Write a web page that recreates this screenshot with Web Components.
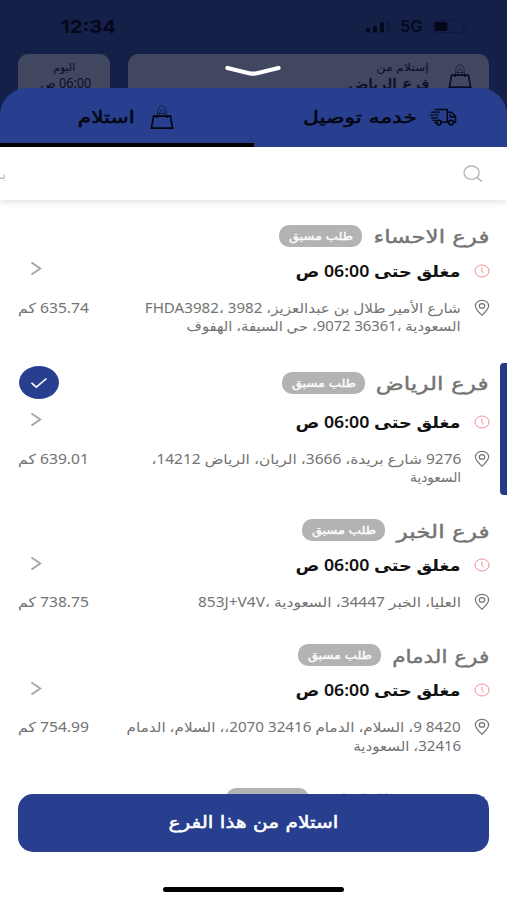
<!DOCTYPE html>
<html lang="ar" dir="rtl">
<head>
<meta charset="utf-8">
<title>استلام</title>
<style>
html,body{margin:0;padding:0;background:#fff;width:507px;height:900px;overflow:hidden}
</style>
</head>
<body>
<branch-page></branch-page>
<script>
const define = (name, html, setup) => customElements.define(name, class extends HTMLElement {
  connectedCallback() {
    if (this.shadowRoot) return;
    const root = this.attachShadow({ mode: 'open' });
    root.innerHTML = typeof html === 'function' ? html(this) : html;
    if (setup) setup(this, root);
  }
});

/* One line of text, widened or narrowed to the width in its "w" attribute. */
define('fit-text', el => `
<style>
:host{display:block;flex:none;direction:rtl;width:${el.getAttribute('w')}px;white-space:nowrap}
span{display:inline-block;transform-origin:right center}
</style><span><slot></slot></span>`, (el, root) => {
  const span = root.querySelector('span');
  const n = span.getBoundingClientRect().width;
  if (n) span.style.transform = `scaleX(${el.getAttribute('w') / n})`;
});

const ICONS = {
  bag: ['0 0 24 26', `<path d="M3.600 12.200H20.400L22.600 24.200H1.400Z" stroke-width="1.700"/><path d="M6.800 14V11.500M17.200 14V11.500" stroke-width="1.500"/><path d="M7.400 11.500C7.400 5 9 1.800 12 1.800s4.600 3.200 4.600 9.700M9.500 11.500C9.500 7.500 10.500 5.800 12 5.800s2.500 1.700 2.500 5.700M8.500 9.500H15.500" stroke-width=".8" opacity=".7"/>`],
  truck: ['0 0 28 18', `<path d="M6 1.500H18.300V14.200H13M18.300 4.200H22.500L26.500 8.600V14.200H24.600M18.300 14.200H19.300M21.300 6.200V9H26" stroke-width="1.500"/><circle cx="10" cy="14.600" r="2.300" stroke-width="1.600"/><circle cx="22" cy="14.600" r="2.300" stroke-width="1.600"/><path d="M2 4.200H11M.7 7H10M2 9.800H9M3.500 12.400H7M5 14.600H7.700" stroke-width="1.200"/>`],
  search: ['0 0 20 18', `<ellipse cx="8.600" cy="7.700" rx="7.600" ry="6.700" stroke-width="1.300"/><path d="M14 12.500L19 16.600" stroke-width="1.500"/>`],
  clock: ['0 0 16 14', `<ellipse cx="8" cy="7" rx="7" ry="6" stroke-width="1"/><path d="M7.800 3.600V7.300L9.800 9.200" stroke-width="1"/>`],
  pin: ['0 0 16 18', `<path d="M8 16.400C4.500 12.700 1.400 10 1.400 6.900C1.400 3.600 4.300 1.300 8 1.300s6.600 2.300 6.600 5.600C14.600 10 11.500 12.700 8 16.400Z" stroke-width="1.200"/><ellipse cx="8" cy="6.900" rx="2.700" ry="2.300" stroke-width="1.200"/>`],
  chevron: ['0 0 12 16', `<path d="M1.500 1.500L10.300 8L1.500 14.500" stroke-width="2"/>`],
  check: ['0 0 18 12', `<path d="M1.500 5.800L6.300 10.200L16.500 1.500" stroke-width="1.600"/>`],
  handle: ['0 0 56 12', `<path d="M2.500 3L24 8.200Q28 9.200 32 8.200L53.500 3" stroke-width="4.200" stroke-linecap="round"/>`]
};
define('line-icon', el => {
  const [box, body] = ICONS[el.getAttribute('name')];
  return `<style>:host{display:block;flex:none;width:${el.getAttribute('w')}px;height:${el.getAttribute('h')}px}
svg{display:block;width:100%;height:100%;fill:none;stroke:currentColor}</style>
<svg viewBox="${box}" preserveAspectRatio="none">${body}</svg>`;
});

define('status-bar', `
<style>
:host{display:flex;direction:ltr;height:54px;box-sizing:border-box;padding:16px 38px 0 61px;justify-content:space-between;
 color:#04081a;font:bold 18px/21px Inter,"Liberation Sans",sans-serif}
.r{display:flex;gap:9px;align-items:center;height:21px}
.net{font-size:15.500px;font-weight:600}
svg{display:block}
</style>
<fit-text w="55">12:34</fit-text>
<div class="r">
 <svg width="26" height="13" viewBox="0 0 26 13"><g fill="#04081a"><rect x="1" y="8" width="4" height="4.500" rx="1"/><rect x="8" y="6" width="4" height="6.500" rx="1"/><rect x="15" y="2" width="4" height="10.500" rx="1"/></g><rect x="21.500" y="0" width="4" height="12.500" rx="1" fill="#111a3d"/></svg>
 <fit-text class="net" w="22">5G</fit-text>
 <svg width="38" height="13" viewBox="1 0 38 13"><rect x="3" y=".5" width="31" height="12" rx="3.500" fill="none" stroke="#10183a"/><rect x="4.500" y="2" width="13" height="9" rx="2" fill="#04081a"/><path d="M35.500 4.500q2 2 0 4z" fill="#10183a"/></svg>
</div>`);

define('order-summary', `
<style>
:host{display:flex;gap:18px;padding:0 18px;height:60px;color:#090f25;font-family:"DejaVu Sans",sans-serif}
section{background:#40475f;border-radius:10px 10px 0 0;box-sizing:border-box;display:flex}
.main{width:361px;padding:5px 17px 0 0;gap:19px}
.main line-icon{margin-top:4px}
.slot{width:92px;flex-direction:column;align-items:center;padding-top:5px}
.a{font-size:10.500px;line-height:16px}
.b{font-size:13.500px;line-height:18px;font-family:"Noto Sans","DejaVu Sans",sans-serif}
.slot .b{margin-right:-4px;margin-top:-1px}
.main .b{font:14px/19px "DejaVu Sans",sans-serif;-webkit-text-stroke:.4px}
</style>
<section class="main"><line-icon name="bag" w="24" h="26"></line-icon>
<div><fit-text class="a" w="52">إستلام من</fit-text><fit-text class="b" w="81">فرع الرياض</fit-text></div></section>
<section class="slot"><fit-text class="a" w="22">اليوم</fit-text><fit-text class="b" w="51">06:00 ص</fit-text></section>`);

define('mode-tabs', `
<style>
:host{display:grid;grid-template-columns:253px 254px;height:59px;background:#273f8e;border-radius:27px 27px 0 0;overflow:hidden;color:#030611}
div{display:flex;box-sizing:border-box;font:17px/26px "DejaVu Sans",sans-serif;-webkit-text-stroke:.5px}
.d{padding:16px 50px 0 0;gap:12px}
.p{padding:16px 80px 0 0;gap:15px;border-bottom:4px solid #000}
.d line-icon{margin-top:4px}
</style>
<div class="d"><line-icon name="truck" w="28" h="18"></line-icon><fit-text w="114">خدمه توصيل</fit-text></div>
<div class="p"><line-icon name="bag" w="24" h="26"></line-icon><fit-text w="57">استلام</fit-text></div>`);

define('search-bar', `
<style>
:host{display:flex;align-items:center;height:53px;padding-right:24px;background:#fff;color:#b4b4b4;box-shadow:0 3px 5px #00000018;clip-path:inset(0 0 -10px 0);position:relative;z-index:1}
fit-text{font:15px/24px "DejaVu Sans",sans-serif;margin-right:457px}
</style>
<line-icon name="search" w="20" h="18"></line-icon><fit-text w="6">بـ</fit-text>`);

define('branch-item', el => `
<style>
:host{display:block;padding:0 18px 31.250px;color:#737373;font-family:"Noto Sans","DejaVu Sans",sans-serif}
.row{display:flex;align-items:center}
.title{height:${el.hasAttribute('selected') ? 33 : 25}px;gap:11px}
.name{font:18px/25px "DejaVu Sans",sans-serif;color:#747474;-webkit-text-stroke:.4px;margin-top:${el.hasAttribute('km') ? 2 : 5}px}
.badge{width:83px;height:22px;border-radius:10px;background:#b3b3b3;color:#fff;display:flex;align-items:center;justify-content:center;font:11px/20px "DejaVu Sans",sans-serif;-webkit-text-stroke:.35px}
.badge fit-text{margin-top:2px}
.tick{margin-right:auto;width:40px;height:33px;border-radius:50%;background:#273f8e;color:#fff;display:flex;align-items:center;justify-content:center;margin-left:.5px}
.time,.addr{margin-right:-1px}
.time{height:24px;margin-top:10.500px;gap:13px;color:#111;font-weight:600;font-size:15.500px;line-height:24px}
.time .go{margin:-4px auto 0 12px;color:#a9a9a9}
.clock{color:#f58d96}
.addr{display:flex;align-items:flex-start;margin-top:15.750px;gap:13px;font-size:13.700px;line-height:18.500px}
.addr .km{margin-right:auto;margin-left:.5px}
</style>
<div class="row title"><fit-text class="name" w="${el.getAttribute('name-w')}">${el.getAttribute('name')}</fit-text>
<div class="badge"><fit-text w="64">طلب مسبق</fit-text></div>${el.hasAttribute('selected') ? '<div class="tick"><line-icon name="check" w="18" h="12"></line-icon></div>' : ''}</div>
${el.hasAttribute('km') ? `<div class="row time"><line-icon class="clock" name="clock" w="16" h="14"></line-icon><fit-text w="165">مغلق حتى 06:00 ص</fit-text><line-icon class="go" name="chevron" w="12" h="15"></line-icon></div>
<div class="addr"><line-icon name="pin" w="16" h="18"></line-icon><div><slot></slot></div><fit-text class="km" w="71">${el.getAttribute('km')} كم</fit-text></div>` : ''}`);

define('branch-list', `
<style>:host{display:block;padding-top:23.250px}</style>
<branch-item name="فرع الاحساء" name-w="116" km="635.74"><fit-text w="316">شارع الأمير طلال بن عبدالعزيز، FHDA3982، 3982</fit-text><fit-text w="274">السعودية ،36361 9072، حي السيفة، الهفوف</fit-text></branch-item>
<branch-item selected name="فرع الرياض" name-w="113" km="639.01" style="margin-top:-.5px"><fit-text w="310">9276 شارع بريدة، 3666، الريان، الرياض 14212،</fit-text><fit-text w="51">السعودية</fit-text></branch-item>
<branch-item name="فرع الخبر" name-w="93" km="738.75"><fit-text w="263">العليا، الخبر 34447، السعودية ،853J+V4V</fit-text></branch-item>
<branch-item name="فرع الدمام" name-w="97" km="754.99"><fit-text w="334">8420 9، السلام، الدمام 32416 2070،، السلام، الدمام</fit-text><fit-text w="108">32416، السعودية</fit-text></branch-item>
<branch-item name="فرع حفر الباطن" name-w="169"></branch-item>`);

define('action-footer', `
<style>
:host{display:flex;flex-direction:column;align-items:center;position:absolute;left:0;right:0;bottom:0;height:106px}
button{all:unset;box-sizing:border-box;width:471px;height:58px;border-radius:15px;background:#273f8e;color:#fff;display:flex;justify-content:center;padding-top:16px;font:16.500px/26px "DejaVu Sans",sans-serif;-webkit-text-stroke:.5px}
.fill{align-self:stretch;flex:1;background:#fff;display:flex;justify-content:center;align-items:flex-end;padding-bottom:8px}
.home{width:181px;height:5px;border-radius:3px;background:#000}
</style>
<button><fit-text w="170">استلام من هذا الفرع</fit-text></button><div class="fill"><div class="home"></div></div>`);

define('branch-page', `
<style>
:host{display:block;position:relative;width:507px;height:900px;overflow:hidden;background:#fff;direction:rtl}
.back{background:#152049;height:147px}
.sheet{margin-top:-59px;position:relative}
.handle{position:absolute;left:225px;top:65px}
.mark{position:absolute;right:0;top:363px;width:7px;height:132px;border-radius:4px 0 0 4px;background:#233b86}
</style>
<div class="back"><status-bar></status-bar><order-summary></order-summary></div>
<div class="sheet"><mode-tabs></mode-tabs><search-bar></search-bar><branch-list></branch-list></div>
<line-icon class="handle" name="handle" w="56" h="12" style="color:#fff"></line-icon>
<div class="mark"></div>
<action-footer></action-footer>`);
</script>
</body>
</html>
